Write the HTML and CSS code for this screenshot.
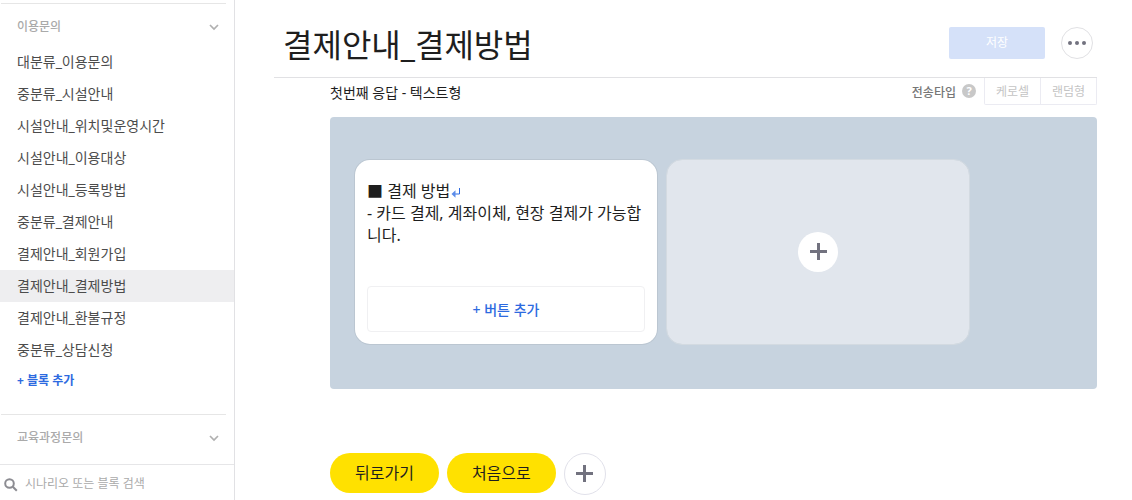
FILE: index.html
```
<!DOCTYPE html>
<html lang="ko">
  <head>
    <meta charset="UTF-8" />
    <meta name="viewport" content="width=device-width, initial-scale=1.0" />
    <title>결제안내_결제방법</title>
    <link rel="stylesheet" href="styles.css">
  </head>
  <body>
    <div class="container">
      <!-- 시나리오 사이드바 -->
      <aside class="sidebar">
        <section class="scenario">
          <button type="button" class="scenario-title">
            이용문의
            <svg class="chevron" viewBox="0 0 10 7"><path d="M1 1l4 4 4-4" /></svg>
          </button>
          <ul class="block-list">
            <li><a href="#">대분류_이용문의</a></li>
            <li><a href="#">중분류_시설안내</a></li>
            <li><a href="#">시설안내_위치및운영시간</a></li>
            <li><a href="#">시설안내_이용대상</a></li>
            <li><a href="#">시설안내_등록방법</a></li>
            <li><a href="#">중분류_결제안내</a></li>
            <li><a href="#">결제안내_회원가입</a></li>
            <li><a href="#" class="active">결제안내_결제방법</a></li>
            <li><a href="#">결제안내_환불규정</a></li>
            <li><a href="#">중분류_상담신청</a></li>
          </ul>
          <button type="button" class="add-block">+ 블록 추가</button>
        </section>
        <section class="scenario">
          <button type="button" class="scenario-title">
            교육과정문의
            <svg class="chevron" viewBox="0 0 10 7"><path d="M1 1l4 4 4-4" /></svg>
          </button>
        </section>

        <!-- 검색 -->
        <label class="search">
          <svg class="search-icon" viewBox="0 0 14 14">
            <circle cx="5.5" cy="5.5" r="4.3" />
            <path d="M8.8 8.8l4 4" />
          </svg>
          <input type="text" placeholder="시나리오 또는 블록 검색" aria-label="시나리오 또는 블록 검색" />
        </label>
      </aside>

      <!-- 블록 편집 영역 -->
      <main class="main">
        <header class="header">
          <h1>결제안내_결제방법</h1>
          <button type="button" class="save" disabled>저장</button>
          <button type="button" class="more" aria-label="더보기">
            <svg viewBox="0 0 18 4">
              <circle cx="2" cy="2" r="2" />
              <circle cx="9" cy="2" r="2" />
              <circle cx="16" cy="2" r="2" />
            </svg>
          </button>
        </header>

        <div class="editor">
          <div class="toolbar">
            <h2>첫번째 응답 - 텍스트형</h2>
            <span class="send-type">전송타입</span>
            <button type="button" class="help" aria-label="도움말">?</button>
            <div class="type-group">
              <button type="button" disabled>케로셀</button>
              <button type="button" disabled>랜덤형</button>
            </div>
          </div>

          <!-- 말풍선 -->
          <div class="bubbles">
            <article class="card">
              <p>
                ■ 결제 방법<svg class="enter" viewBox="0 0 12 12"><path class="line" d="M9.5 1v6H4" /><path class="head" d="M5.5 3.2L1.5 7l4 3.8z" /></svg><br />
                - 카드 결제, 계좌이체, 현장 결제가 가능합니다.
              </p>
              <button type="button" class="add-button">+ 버튼 추가</button>
            </article>
            <div class="card card-empty">
              <button type="button" class="plus" aria-label="말풍선 추가">
                <svg viewBox="0 0 17 17"><path d="M7 0h3v7h7v3h-7v7H7v-7H0V7h7z" /></svg>
              </button>
            </div>
          </div>

          <!-- 바로연결 버튼 -->
          <div class="quick-replies">
            <button type="button" class="quick">뒤로가기</button>
            <button type="button" class="quick">처음으로</button>
            <button type="button" class="plus plus-line" aria-label="바로연결 추가">
              <svg viewBox="0 0 17 17"><path d="M7 0h3v7h7v3h-7v7H7v-7H0V7h7z" /></svg>
            </button>
          </div>
        </div>
      </main>
    </div>
  </body>
</html>
```

FILE: styles.css
```
* {
  margin: 0;
  padding: 0;
  box-sizing: border-box;
}

body {
  font-family: "Noto Sans", "Noto Sans CJK KR", sans-serif;
  font-size: 14px;
  color: #1e1e1e;
  background-color: #fff;
}

button,
input {
  font: inherit;
  color: inherit;
  background: none;
  border: none;
}

button {
  cursor: pointer;
}

svg {
  display: block;
}

.container {
  display: flex;
  height: 100vh;
}

/* 사이드바 */
.sidebar {
  display: flex;
  flex-direction: column;
  flex: none;
  width: 235px;
  padding-top: 3px;
  border-right: 1px solid #e1e1e4;
}

.scenario::before {
  content: "";
  display: block;
  height: 1px;
  margin: 0 8px 0 1px;
  background-color: #e6e6e6;
}

.scenario-title {
  display: flex;
  align-items: center;
  justify-content: space-between;
  width: 100%;
  padding: 13px 15px 9px 17px;
  font-size: 12px;
  font-weight: 500;
  line-height: 20px;
  color: #aaa;
}

.chevron {
  width: 10px;
  height: 7px;
  fill: none;
  stroke: #b0b0b0;
  stroke-width: 1.7;
}

.block-list {
  list-style: none;
}

.block-list a {
  display: block;
  padding: 0 17px;
  line-height: 32px;
  color: #4c4c4c;
  text-decoration: none;
}

.block-list .active {
  background-color: #eeeef0;
}

.add-block {
  display: block;
  margin-bottom: 18px;
  padding: 0 17px;
  font-size: 12px;
  font-weight: 700;
  line-height: 30px;
  color: #2d6ae0;
}

.search {
  display: flex;
  align-items: center;
  gap: 7px;
  height: 36px;
  margin-top: auto;
  padding: 2px 0 0 4px;
  border-top: 1px solid #e6e6e8;
}

.search-icon {
  flex: none;
  width: 14px;
  height: 14px;
  margin-top: 2px;
  fill: none;
  stroke: #8c8c92;
  stroke-width: 2;
}

.search input {
  flex: 1;
  min-width: 0;
  font-size: 12px;
  outline: none;
}

.search input::placeholder {
  color: #aaa;
}

/* 본문 */
.main {
  flex: 1;
  min-width: 0;
  padding: 0 35px 0 39px;
}

.header {
  display: flex;
  align-items: center;
  gap: 16px;
  height: 78px;
  padding: 8px 4px 0 9px;
  border-bottom: 1px solid #e1e1e4;
}

.header h1 {
  flex: 1;
  font-size: 32px;
  font-weight: 400;
}

.save {
  width: 96px;
  height: 32px;
  padding-bottom: 2px;
  border-radius: 2px;
  font-size: 12px;
  color: #fff;
  background-color: #d5e1f9;
}

.more {
  display: flex;
  align-items: center;
  justify-content: center;
  width: 32px;
  height: 32px;
  border: 1px solid #e1e1e4;
  border-radius: 50%;
}

.more svg {
  width: 18px;
  height: 4px;
  fill: #72727f;
}

.editor {
  padding-left: 56px;
}

.toolbar {
  display: flex;
  align-items: center;
  height: 27px;
}

.toolbar h2 {
  flex: 1;
  font-size: 14px;
  font-weight: 400;
}

.send-type {
  font-size: 12px;
  font-weight: 500;
  color: #777;
}

.help {
  width: 14px;
  height: 14px;
  margin: 0 8px 1px 6px;
  border-radius: 50%;
  font-size: 11px;
  font-weight: 700;
  line-height: 14px;
  color: #fff;
  background-color: #c8c8c8;
}

.type-group {
  display: flex;
  width: 113px;
  height: 27px;
  border: 1px solid #ebebf2;
  border-top: none;
  border-radius: 0 0 2px 2px;
}

.type-group button {
  flex: 1;
  font-size: 12px;
  color: #c4c4c4;
}

.type-group button + button {
  border-left: 1px solid #ebebf2;
}

/* 말풍선 */
.bubbles {
  display: flex;
  gap: 8px;
  margin-top: 12px;
  padding: 42px 24px 44px;
  border-radius: 4px;
  background-color: #c7d3df;
}

.card {
  display: flex;
  flex-direction: column;
  width: 304px;
  min-height: 186px;
  padding: 20px 12px 12px;
  border: 1px solid rgba(0, 0, 0, 0.06);
  border-radius: 16px;
  background-color: #fff;
  background-clip: padding-box;
}

.card p {
  font-size: 16px;
  line-height: 22px;
  word-break: break-all;
}

.enter {
  display: inline-block;
  width: 12px;
  height: 12px;
  vertical-align: -2px;
}

.enter .line {
  fill: none;
  stroke: #2d6ae0;
}

.enter .head {
  fill: #5a8bea;
}

.add-button {
  height: 46px;
  margin-top: auto;
  border: 1px solid #f0f0f2;
  border-radius: 4px;
  font-weight: 500;
  color: #2d6ae0;
}

.card-empty {
  align-items: center;
  justify-content: center;
  padding: 0;
  border-color: #d3dae1;
  background-color: #e1e6ed;
}

.plus {
  display: flex;
  align-items: center;
  justify-content: center;
  width: 40px;
  height: 40px;
  padding-bottom: 1px;
  border-radius: 50%;
  background-color: #fff;
}

.plus svg {
  width: 17px;
  height: 17px;
  fill: #72727f;
}

.plus-line {
  width: 42px;
  height: 42px;
  border: 1px solid #e1e1ea;
}

/* 바로연결 */
.quick-replies {
  display: flex;
  align-items: flex-start;
  gap: 8px;
  margin-top: 64px;
}

.quick {
  height: 40px;
  padding: 0 25px 2px;
  border-radius: 20px;
  font-size: 16px;
  background-color: #ffe100;
}
```
